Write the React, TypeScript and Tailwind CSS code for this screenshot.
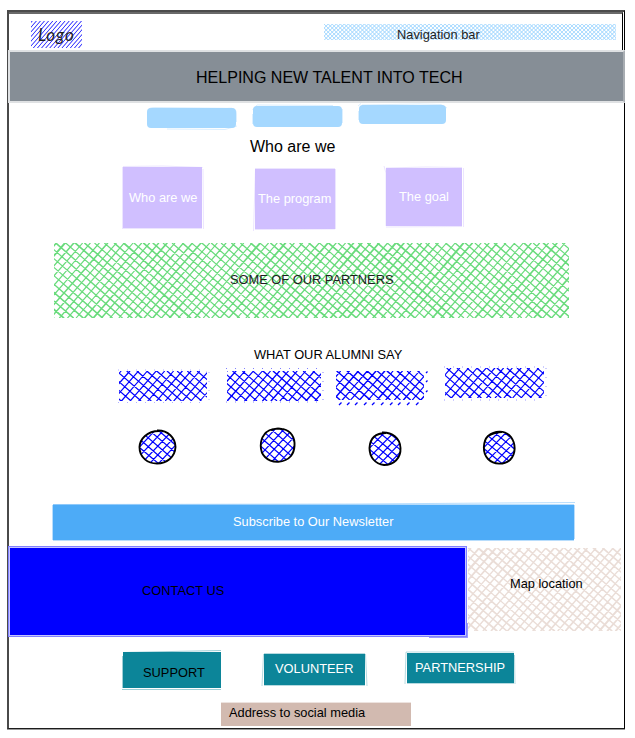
import type { ReactNode } from "react";

type HatchProps = {
  w: number;
  h: number;
  color: string;
  gap?: number;
  stroke?: number;
  seed?: number;
  cross?: boolean;
  angle?: number;
  jitter?: number;
  shift?: number;
};

function random(seed: number) {
  let s = seed * 7919 + 17;
  return () => {
    s = (s * 16807) % 2147483647;
    return s / 2147483647 - 0.5;
  };
}

// Hand-drawn hatching: every line is stroked twice with slightly different ends.
function Hatch({ w, h, color, gap = 6.6, stroke = 1.1, seed = 1, cross = true, angle = 49, jitter = 0.6, shift = 0 }: HatchProps) {
  const rnd = random(seed);
  const lines: string[] = [];
  const add = (deg: number) => {
    const t = (deg * Math.PI) / 180;
    const slope = Math.tan(t);
    const run = h / slope;
    const step = gap / Math.abs(Math.sin(t));
    const from = Math.min(0, -Math.abs(run)) - step;
    const to = w + Math.abs(run) + step;
    for (let x = from + shift; x < to; x += step) {
      for (let i = 0; i < 2; i++) {
        const a = x + rnd() * jitter;
        const b = x + run + rnd() * jitter;
        lines.push(`M${a.toFixed(2)} 0L${b.toFixed(2)} ${h}`);
      }
    }
  };
  add(-angle);
  if (cross) add(90 - angle);
  return (
    <svg className="absolute inset-0 h-full w-full overflow-hidden" viewBox={`0 0 ${w} ${h}`} preserveAspectRatio="none">
      <path d={lines.join("")} stroke={color} strokeWidth={stroke} fill="none" />
    </svg>
  );
}

// Loose pen strokes that run past the edges of a filled block.
function Edge({ d, color, opacity = 0.4 }: { d: string; color: string; opacity?: number }) {
  return (
    <svg className="pointer-events-none absolute inset-0 h-full w-full overflow-visible">
      <path d={d} stroke={color} strokeOpacity={opacity} strokeWidth="1" fill="none" />
    </svg>
  );
}

function Block({ className, children }: { className: string; children?: ReactNode }) {
  return <div className={`relative shrink-0 whitespace-nowrap ${className}`}>{children}</div>;
}

function Face({ w, h, seed, d, className }: { w: number; h: number; seed: number; d: string; className: string }) {
  const rnd = random(seed);
  const lines: string[] = [];
  for (let x = -50; x < 90; x += 8.6) {
    lines.push(`M${x + rnd()} ${h}L${x + 32 + rnd()} 0`);
  }
  for (let x = -50; x < 90; x += 9.9) {
    lines.push(`M${x + rnd()} 0L${x + 40 + rnd()} ${h}`);
  }
  return (
    <svg className={`shrink-0 overflow-visible ${className}`} width={w} height={h} viewBox={`0 0 ${w} ${h}`}>
      <clipPath id={`face-${seed}`}>
        <path d={d} />
      </clipPath>
      <path d={lines.join("")} clipPath={`url(#face-${seed})`} stroke="#0000ff" strokeWidth="1.2" fill="none" />
      <path d={d} stroke="#000" strokeWidth="1.9" fill="none" />
    </svg>
  );
}

export default function App() {
  return (
    <div className="h-[738px] w-[635px] overflow-hidden bg-white pl-[7px] pt-[10px] font-['Liberation_Sans',Arial,sans-serif] text-[12.83px] leading-4 text-black">
      <div className="flex h-[719px] w-[618px] flex-col border-b border-l-2 border-r border-t-2 border-b-[#1c1c1c] border-l-[#4a4a4a] border-r-black border-t-[#4c4c4c] shadow-[0_1px_0_#999999]">
        <header className="mr-px flex h-[38px] shrink-0 items-start border-r border-t-2 border-r-black border-t-[#6a6a6a] pr-px">
          <Block className="ml-[22px] mt-[7px] h-[27px] w-[51px] pl-[7px] pt-[4px]">
            <Hatch w={51} h={27} color="#0000ff" gap={3.1} stroke={0.55} cross={false} jitter={0.4} seed={4} />
            <span className="relative block font-['Lato',cursive] text-[17px] italic leading-5 tracking-[0.9px] text-[#1e1e1e]">Logo</span>
          </Block>
          <Block className="ml-[242px] mt-[10px] h-[16px] w-[292px] pl-[73px] pt-[3px] text-[#1e1e1e]">
            <Hatch w={292} h={16} color="#a5d8ff" gap={2.85} stroke={0.7} jitter={0.3} angle={45} seed={3} />
            <span className="relative">Navigation bar</span>
          </Block>
        </header>

        <Block className="-ml-px -mr-px h-[53px] border-2 border-[#dfe1e3] border-r-[#a8adb2] bg-[#868e96] pl-[186px] pt-[15px] text-[16.05px] leading-5">
          HELPING NEW TALENT INTO TECH
        </Block>

        <nav className="flex h-[34px] shrink-0 items-start pl-[138px]">
          <Block className="mt-[5px] h-5 w-[89px] rounded-[4px] bg-[#a5d8ff]">
            <Edge color="#a5d8ff" d="M1 2Q2 -.5 8 -.5L80 .3Q90 -1 89.5 6V14M20 21L78 21.5L90 18" />
          </Block>
          <Block className="ml-[17px] mt-[3px] h-[21px] w-[89px] rounded-[4px] bg-[#a5d8ff]">
            <Edge color="#a5d8ff" d="M-.5 4L4 -1L80 -.5M89.5 3V17M-.5 8V18" />
          </Block>
          <Block className="ml-[17px] mt-[2px] h-[19px] w-[87px] rounded-[4px] bg-[#a5d8ff]">
            <Edge color="#a5d8ff" d="M-1 1L2 -1.5M3 0L60 -1L82 -.5L88 3M-.5 6V15" />
          </Block>
        </nav>

        <h1 className="ml-[241px] h-[29px] shrink-0 whitespace-nowrap text-base font-normal leading-5">Who are we</h1>

        <section className="flex h-[77px] shrink-0 items-start pl-[114px] text-white">
          <Block className="mt-px h-[61px] w-[79px] bg-[#d0bfff] pl-[6px] pt-[23px]">
            <Edge color="#d0bfff" d="M0 -.5L40 -1L79.5 .5M-.5 0V62M80 2L80.5 62M0 61.5H79" />
            Who are we
          </Block>
          <Block className="ml-[53px] mt-[3px] h-[60px] w-[80px] bg-[#d0bfff] pl-[3px] pt-[22px]">
            <Edge color="#d0bfff" d="M0 -.5H80M.5 0L-1.5 62M80.5 0V60M0 60.5L80 60" />
            The program
          </Block>
          <Block className="ml-[51px] mt-[2px] h-[58px] w-[76px] bg-[#d0bfff] pl-[13px] pt-[21px]">
            <Edge color="#d0bfff" d="M-2 -2L0 5V58M0 0L40 -1L76 -.5M77.5 0V59M0 59L76 58.5" />
            The goal
          </Block>
        </section>

        <Block className="ml-[45px] h-[75px] w-[515px] pl-[176px] pt-[29px] text-[#1e1e1e]">
          <Hatch w={515} h={75} color="#69db7c" gap={6.4} stroke={1.1} seed={9} jitter={1.4} />
          <span className="relative">SOME OF OUR PARTNERS</span>
        </Block>

        <h2 className="ml-[245px] mt-[29px] h-[20px] shrink-0 font-normal">WHAT OUR ALUMNI SAY</h2>

        <section className="flex h-[60px] shrink-0 items-start pl-[110px]">
          <Block className="mt-1 h-[30px] w-[88px]">
            <Hatch w={88} h={30} color="#0000ff" seed={11} shift={2} />
            <svg className="absolute inset-0 h-full w-full overflow-visible">
              <path d="M-1 -1H88M90 1V31M-1 31.5H86" stroke="#0000ff" strokeOpacity=".3" strokeDasharray="1 8" fill="none" />
            </svg>
          </Block>
          <Block className="ml-5 mt-1 h-[30px] w-[94px]">
            <Hatch w={94} h={30} color="#0000ff" seed={12} jitter={0.9} />
            <svg className="absolute inset-0 h-full w-full overflow-visible">
              <path d="M-1 -2.5H94M96 1V31M-1 31H90" stroke="#0000ff" strokeOpacity=".5" strokeDasharray="1 8" fill="none" />
            </svg>
          </Block>
          <Block className="ml-[15px] mt-1 h-[29px] w-[88px]">
            <Hatch w={88} h={29} color="#0000ff" seed={13} jitter={0.9} shift={4} />
            <svg className="absolute inset-0 h-full w-full overflow-visible">
              <path d="M3 34l2.5-2.5M11 34l2.5-2.5M19 34l2.5-2.5M28 34l2.5-2.5M36 34l2.5-2.5M45 34l2.5-2.5M54 34l2.5-2.5M62 34l2.5-2.5M71 34l2.5-2.5M80 34l2.5-2.5M90 2l1.5-1.5M90 11l1.5-1.5M90 21l1.5-1.5" stroke="#0000ff" strokeWidth="1.3" fill="none" />
            </svg>
          </Block>
          <Block className="ml-[21px] mt-px h-[30px] w-[99px]">
            <Hatch w={99} h={30} color="#0000ff" seed={14} shift={6} />
            <svg className="absolute inset-0 h-full w-full overflow-visible">
              <path d="M-1 -1H99M101 0V31M-1 32H98" stroke="#0000ff" strokeOpacity=".4" strokeDasharray="1 8" fill="none" />
            </svg>
          </Block>
        </section>

        <section className="flex h-[78px] shrink-0 items-start pl-[130px]">
          <Face className="mt-[3px]" w={37} h={34} seed={21} d="M18 .5C29 0 36.5 8 36.5 17C36 27 28 33.5 18 33.5C9 33.5 .5 28 .5 17C1 9 8 1 20 1" />
          <Face className="ml-[84px] mt-px" w={35} h={35} seed={22} d="M11 2C20 -1 28 1 32 7C36 13 35 23 31 28C25 35 12 36 5 29C-1 23 0 12 4 7C8 1 15 0 22 1" />
          <Face className="ml-[74px] mt-[5px]" w={32} h={33} seed={23} d="M13 .5C23 0 31 6 31.5 16C32 26 25 33 15 33C6 32 .5 25 .5 16C1 6 7 1 17 1" />
          <Face className="ml-[82px] mt-[4px]" w={32} h={33} seed={24} d="M5 5C12 -1 22 -1 28 6C33 13 33 23 27 29C21 34 11 34 5 28C-1 22 0 10 5 5C10 2 14 1 19 1" />
        </section>

        <Block className="ml-[44px] h-[35px] w-[521px] bg-[#4dabf7] pl-[180px] pt-[9px] text-white">
          <Edge color="#4dabf7" d="M0 -.5L300 -1L522 -2.5M0 -.5H521M-.5 0V35M0 35.5L521 35.5M521.5 0V34" />
          Subscribe to Our Newsletter
        </Block>

        <section className="-ml-px mt-[6px] flex h-[105px] shrink-0 items-start">
          <Block className="h-[91px] w-[459px] border border-[#8080ff] bg-[#0000ff] pl-[133px] pt-[36px] shadow-[inset_0_0_0_1px_#c4c4ff]">
            <Edge color="#0000ff" d="M420 90.5L458.5 90.5V76" />
            <span className="relative">CONTACT US</span>
          </Block>
          <Block className="ml-px mt-[2px] h-[83px] w-[153px] pl-[42px] pt-[28px]">
            <Hatch w={153} h={83} color="#eaddd7" gap={6.3} stroke={1.3} seed={31} jitter={1.3} />
            <span className="relative">Map location</span>
          </Block>
        </section>

        <section className="flex h-[52px] shrink-0 items-start pl-[114px] text-white">
          <Block className="mt-[1px] h-[36px] w-[98px] bg-[#0c8599] pl-5 pt-[13px] text-black">
            <Edge color="#0c8599" d="M0 .5L98 -1.5M-1 37.5H98M-.5 4V36" />
            SUPPORT
          </Block>
          <Block className="ml-[43px] mt-[3px] h-[31px] w-[101px] bg-[#0c8599] pl-[11px] pt-[7px]">
            <Edge color="#0c8599" d="M0 -.5H101M-.5 0L-2 32M101.5 0L103 32M0 31.5H101" opacity={0.3} />
            VOLUNTEER
          </Block>
          <Block className="ml-[42px] mt-[2px] h-[30px] w-[107px] bg-[#0c8599] pl-2 pt-[7px]">
            <Edge color="#0c8599" d="M-1 -1H107M-1 -1L-2 31M107.5 2L108 31M0 30.5H107" opacity={0.3} />
            PARTNERSHIP
          </Block>
        </section>

        <Block className="ml-[212px] h-[23px] w-[190px] bg-[#d2bab0] pl-2 pt-[2px]">
          <Edge color="#d2bab0" d="M0 -.5H190M.5 0V23" />
          Address to social media
        </Block>
      </div>
    </div>
  );
}
